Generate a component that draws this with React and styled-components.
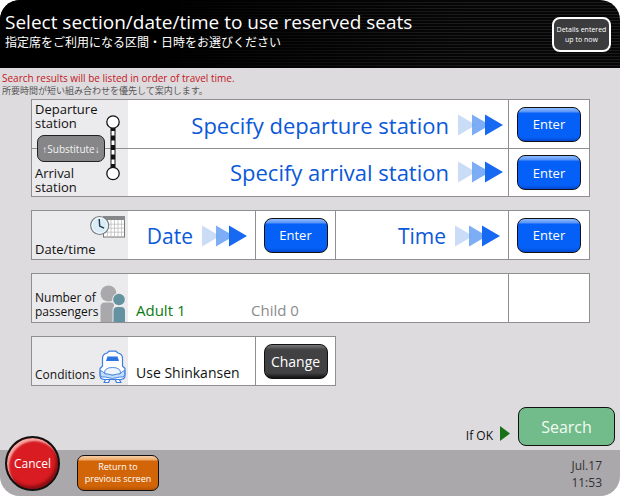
import styled, { createGlobalStyle, css } from "styled-components";

const GlobalStyle = createGlobalStyle`
  * {
    box-sizing: border-box;
  }
  body {
    margin: 0;
    background: #fff;
    font-family: "Open Sans", "Noto Sans CJK JP", sans-serif;
    color: #111;
  }
  button {
    font-family: inherit;
    padding: 0;
    cursor: pointer;
  }
  h1, p {
    margin: 0;
    font-weight: 400;
  }
`;

const Arrows = () => (
  <ArrowSvg width="45" height="22" viewBox="0 0 45 22" aria-hidden="true">
    <path d="M0 0.5 18 11 0 21.5Z" fill="#cbdcf6" />
    <path d="M14 0.5 32 11 14 21.5Z" fill="#6ea4f4" fillOpacity="0.9" />
    <path d="M27 0.5 45 11 27 21.5Z" fill="#1769f2" />
  </ArrowSvg>
);

const RouteIcon = () => (
  <svg width="14" height="66" viewBox="0 0 14 66" aria-hidden="true">
    <path d="M7 13V53" stroke="#111" strokeWidth="5" />
    <path d="M7 16V52" stroke="#fff" strokeWidth="3" strokeDasharray="4.5 5" />
    <circle cx="7" cy="7" r="6.2" fill="#fff" stroke="#111" strokeWidth="1.3" />
    <circle cx="7" cy="58.5" r="6.2" fill="#fff" stroke="#111" strokeWidth="1.3" />
  </svg>
);

const CalendarIcon = () => (
  <svg width="36" height="24" viewBox="0 0 36 24" aria-hidden="true">
    <rect x="13.5" y="1.5" width="21" height="20.5" fill="#fff" stroke="#777" />
    <rect x="13" y="1" width="22" height="4" fill="#85878a" />
    <path
      d="M14 9.2H34M14 13.2H34M14 17.2H34M17.5 5V22M21 5V22M24.5 5V22M28 5V22M31.5 5V22"
      stroke="#bcbcbc"
      strokeWidth="0.8"
    />
    <circle cx="9.7" cy="10.5" r="9" fill="#d9edf6" stroke="#74797d" strokeWidth="1.2" />
    <circle cx="9.7" cy="10.5" r="7.6" fill="none" stroke="#f3fafd" strokeWidth="1" />
    <path d="M9.2 4 9.7 11 14 13.2" fill="none" stroke="#27364e" strokeWidth="1.4" />
  </svg>
);

const PeopleIcon = () => (
  <svg width="26" height="37" viewBox="0 0 26 37" aria-hidden="true">
    <circle cx="8.5" cy="8.5" r="8" fill="#a9a9ab" />
    <path d="M0.5 37V22Q0.5 17.5 5 17.5H11Q14 17.5 14 20V37Z" fill="#a9a9ab" />
    <circle cx="19" cy="14.5" r="6.8" fill="#ebeaec" />
    <path d="M12.5 37V25Q12.5 20.5 17 20.5H21Q26 20.5 26 25V37Z" fill="#ebeaec" />
    <circle cx="19" cy="14.5" r="5.8" fill="#6592a1" />
    <path d="M13.5 37V26Q13.5 22 17.5 22H21Q25 22 25 26V37Z" fill="#6592a1" />
  </svg>
);

const TrainIcon = () => (
  <svg width="27" height="35" viewBox="0 0 27 35" aria-hidden="true">
    <g fill="#fff" stroke="#3c7fe0" strokeWidth="1.2" strokeLinejoin="round">
      <path d="M7.5 28 5 32.5H9.5L11 29M19.5 28 22 32.5H17.5L16 29" />
      <path d="M8 3 10 1.2H17L19 3Q23.5 4 23.5 8.5V16L26 18.5V25.5Q26 29 22 29.5H5Q1 29 1 25.5V18.5L3.5 16V8.5Q3.5 4 8 3Z" />
      <path
        d="M1.3 20.5Q4 21 5.5 23.5Q13.5 26.5 21.5 23.5Q23 21 25.7 20.5V25Q25 28 21 27Q13.5 30 6 27Q2 28 1.3 25Z"
        fill="#c3dcfb"
        strokeWidth="0.9"
      />
      <path
        d="M5.5 23.5Q5 17.5 13.5 17.5T21.5 23.5Q13.5 26.5 5.5 23.5Z"
        fill="#eef5ff"
        strokeWidth="0.9"
      />
    </g>
    <path d="M8.5 6.5H18.5L20 11H7Z" fill="#2c74e0" />
  </svg>
);

const App = () => {
  return (
    <>
      <GlobalStyle />
      <Screen>
        <Header>
          <div>
            <Title>Select section/date/time to use reserved seats</Title>
            <SubTitle lang="ja">指定席をご利用になる区間・日時をお選びください</SubTitle>
          </div>
          <DetailsButton>
            Details entered
            <br />
            up to now
          </DetailsButton>
        </Header>

        <Main>
          <Notice>Search results will be listed in order of travel time.</Notice>
          <NoticeJa lang="ja">所要時間が短い組み合わせを優先して案内します。</NoticeJa>

          <Panels>
            <StationPanel>
              <StationLabels>
                <StationName>
                  Departure
                  <br />
                  station
                </StationName>
                <StationName $last>
                  Arrival
                  <br />
                  station
                </StationName>
                <SubstituteButton>
                  <Arrow>↑</Arrow>Substitute<Arrow>↓</Arrow>
                </SubstituteButton>
                <RouteHolder>
                  <RouteIcon />
                </RouteHolder>
              </StationLabels>
              <Prompt $large>
                Specify departure station
                <Arrows />
              </Prompt>
              <ButtonCell>
                <KeyButton>Enter</KeyButton>
              </ButtonCell>
              <Prompt $large $ruled>
                Specify arrival station
                <Arrows />
              </Prompt>
              <ButtonCell $ruled>
                <KeyButton>Enter</KeyButton>
              </ButtonCell>
            </StationPanel>

            <DatePanel>
              <Label $iconTop>
                <LabelText>Date/time</LabelText>
                <CalendarIcon />
              </Label>
              <Prompt>
                Date
                <Arrows />
              </Prompt>
              <ButtonCell>
                <KeyButton>Enter</KeyButton>
              </ButtonCell>
              <Prompt $divided>
                Time
                <Arrows />
              </Prompt>
              <ButtonCell>
                <KeyButton>Enter</KeyButton>
              </ButtonCell>
            </DatePanel>

            <PassengerPanel>
              <Label>
                <LabelText $small>
                  Number of
                  <br />
                  passengers
                </LabelText>
                <PeopleIcon />
              </Label>
              <Value $color="#0b7a12">Adult 1</Value>
              <Value $color="#8b8b8d">Child 0</Value>
              <ButtonCell />
            </PassengerPanel>

            <ConditionPanel>
              <Label>
                <LabelText $small>Conditions</LabelText>
                <TrainIcon />
              </Label>
              <Value $small>Use Shinkansen</Value>
              <ButtonCell>
                <KeyButton $dark>Change</KeyButton>
              </ButtonCell>
            </ConditionPanel>
          </Panels>

          <SearchRow>
            <IfOk>If OK</IfOk>
            <svg width="10" height="15" viewBox="0 0 10 15" aria-hidden="true">
              <path d="M0 0 10 7.5 0 15Z" fill="#187018" />
            </svg>
            <SearchButton>Search</SearchButton>
          </SearchRow>
        </Main>

        <Footer>
          <CancelButton>Cancel</CancelButton>
          <ReturnButton>
            Return to
            <br />
            previous screen
          </ReturnButton>
          <Clock>
            Jul.17
            <br />
            11:53
          </Clock>
        </Footer>
      </Screen>
    </>
  );
};
export default App;

const line = "1px solid #8f8f92";

const Screen = styled.div`
  display: flex;
  flex-direction: column;
  min-height: 100vh;
  border-radius: 20px;
  overflow: hidden;
  background: #dddbde;
`;

const Header = styled.header`
  display: flex;
  justify-content: space-between;
  align-items: flex-start;
  height: 68px;
  padding: 8px 9px 0 5px;
  color: #fff;
  background:
    linear-gradient(90deg, #000 25%, transparent 75%),
    repeating-linear-gradient(#060606 0 2px, #1c1c1c 2px 3px);
`;

const Title = styled.h1`
  font-size: 19px;
  line-height: 28px;
  white-space: nowrap;
`;

const SubTitle = styled.p`
  font-size: 12px;
  line-height: 14px;
`;

const DetailsButton = styled.button`
  width: 59px;
  height: 35px;
  margin-top: 9px;
  border: 2px solid #fff;
  border-radius: 8px;
  background: #3c3c3e;
  color: #fff;
  font-size: 7px;
  line-height: 10px;
  white-space: nowrap;
`;

const Main = styled.main`
  flex: 1;
  display: flex;
  flex-direction: column;
  padding: 3px 5px 4px 2px;
`;

const Notice = styled.p`
  font-size: 10px;
  line-height: 14px;
  color: #c4161c;
`;

const NoticeJa = styled.p`
  font-size: 9px;
  line-height: 12px;
  color: #555;
`;

const Panels = styled.div`
  display: flex;
  flex-direction: column;
  gap: 13px;
  margin: 2px 25px 0 29px;
`;

const Panel = styled.section`
  display: grid;
  grid-auto-rows: 48px;
  border: ${line};
  background: #fff;
`;

const StationPanel = styled(Panel)`
  grid-template-columns: 96px 1fr 81px;
`;

const DatePanel = styled(Panel)`
  grid-template-columns: 96px 127px 80px 1fr 81px;
`;

const PassengerPanel = styled(Panel)`
  grid-template-columns: 96px 115px 1fr 81px;
`;

const ConditionPanel = styled(Panel)`
  grid-template-columns: 96px 127px 80px;
  align-self: flex-start;
`;

const StationLabels = styled.div`
  position: relative;
  grid-row: span 2;
  display: grid;
  grid-template-rows: 1fr 1fr;
  background: #ebeaec;
`;

const StationName = styled.div`
  display: flex;
  align-items: ${(props) => (props.$last ? "flex-end" : "flex-start")};
  padding: 2px 3px;
  border-top: ${(props) => (props.$last ? line : "none")};
  font-size: 13px;
  line-height: 14px;
`;

// sits across the rule between the two stations
const SubstituteButton = styled.button`
  position: absolute;
  top: 35px;
  left: 5px;
  width: 68px;
  height: 27px;
  border: 1px solid #222;
  border-radius: 7px;
  background: #868688;
  color: #f2f2f2;
  font-size: 10px;
  white-space: nowrap;
`;

const Arrow = styled.span`
  font-family: "Liberation Sans", sans-serif;
`;

const RouteHolder = styled.div`
  position: absolute;
  top: 15px;
  right: 8px;
  height: 66px;
`;

const Label = styled.div`
  display: flex;
  justify-content: space-between;
  align-items: flex-end;
  padding: 0 2px 0 3px;
  background: #ebeaec;
  white-space: nowrap;

  > svg {
    flex: none;
    align-self: ${(props) => (props.$iconTop ? "flex-start" : "flex-end")};
    margin-top: ${(props) => (props.$iconTop ? "4px" : "0")};
    margin-left: -10px;
  }
`;

const LabelText = styled.span`
  padding-bottom: 3px;
  font-size: ${(props) => (props.$small ? "12px" : "13px")};
  line-height: 14px;
`;

const Prompt = styled.div`
  display: flex;
  justify-content: flex-end;
  align-items: center;
  gap: 9px;
  padding-right: ${(props) => (props.$large ? "5px" : "8px")};
  padding-top: ${(props) => (props.$ruled ? "0" : "2px")};
  padding-bottom: ${(props) => (props.$ruled ? "2px" : "0")};
  border-top: ${(props) => (props.$ruled ? line : "none")};
  border-left: ${(props) => (props.$divided ? line : "none")};
  color: #0b59d8;
  font-size: ${(props) => (props.$large ? "22px" : "21px")};
  line-height: 28px;
  white-space: nowrap;
`;

const ArrowSvg = styled.svg`
  flex: none;
`;

const ButtonCell = styled.div`
  display: flex;
  justify-content: center;
  align-items: center;
  border-left: ${line};
  border-top: ${(props) => (props.$ruled ? line : "none")};
`;

const KeyButton = styled.button`
  width: 64px;
  height: 35px;
  border: 1px solid #111;
  border-radius: 8px;
  background: linear-gradient(#8ebcff 0, #5592f6 4px, #0560f8 5px, #0560f8 29px, #0348d0 100%);
  color: #fff;
  font-size: 13px;

  ${(props) =>
    props.$dark &&
    css`
      background: linear-gradient(#777 0, #555 3px, #414042 5px, #414042 28px, #111 100%);
      font-size: 14px;
    `}
`;

const Value = styled.div`
  display: flex;
  align-items: flex-end;
  padding: 0 0 2px 8px;
  color: ${(props) => props.$color || "#111"};
  font-size: ${(props) => (props.$small ? "14px" : "15px")};
  line-height: 20px;
  white-space: nowrap;
`;

const SearchRow = styled.div`
  display: flex;
  justify-content: flex-end;
  align-items: flex-end;
  margin-top: auto;

  > svg {
    margin: 0 8px 5px 7px;
  }
`;

const IfOk = styled.span`
  font-size: 12px;
  line-height: 20px;
`;

const SearchButton = styled.button`
  width: 97px;
  height: 39px;
  border: 1px solid #111;
  border-radius: 8px;
  background: #72bb8b;
  color: #f2fbf2;
  font-size: 16px;
`;

const Footer = styled.footer`
  display: flex;
  align-items: flex-end;
  height: 46px;
  padding: 0 18px 5px 5px;
  background: #aaa8ab;
`;

const CancelButton = styled.button`
  width: 55px;
  height: 55px;
  margin-right: 17px;
  border: 2px solid #111;
  border-radius: 50%;
  background: #d81c22;
  box-shadow: inset 2px 3px 2px #f4a8a4, inset -2px -3px 3px #8c0d12;
  color: #fff;
  font-size: 12px;
  font-weight: 500;
`;

const ReturnButton = styled.button`
  width: 82px;
  height: 36px;
  border: 1px solid #111;
  border-radius: 7px;
  background: linear-gradient(#f6cfa8 0, #efa866 4px, #d26507 5px, #d26507 30px, #b85200 100%);
  color: #fff;
  font-size: 9px;
  line-height: 12px;
  white-space: nowrap;
`;

const Clock = styled.div`
  margin-left: auto;
  color: #333;
  font-size: 12px;
  line-height: 17px;
  text-align: right;
`;
